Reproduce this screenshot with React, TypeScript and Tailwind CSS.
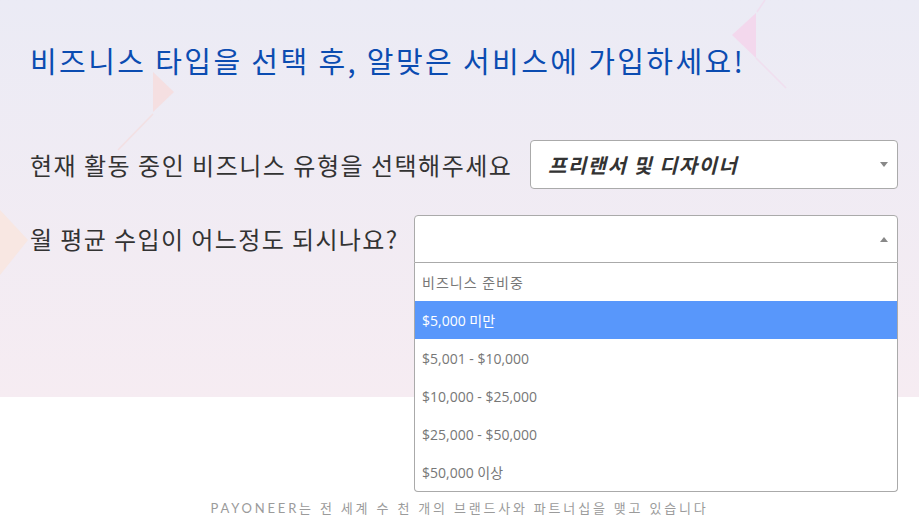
import { useState } from "react";

const OPTIONS = [
  "비즈니스 준비중",
  "$5,000 미만",
  "$5,001 - $10,000",
  "$10,000 - $25,000",
  "$25,000 - $50,000",
  "$50,000 이상",
];

const KR = "font-['Noto_Sans_CJK_KR',sans-serif]";

function Arrow({ up = false }: { up?: boolean }) {
  return (
    <svg width="8" height="5" viewBox="0 0 8 5" className="shrink-0">
      {up ? <path d="M0 5 L4 0 L8 5 Z" fill="#888" /> : <path d="M0 0 L8 0 L4 5 Z" fill="#888" />}
    </svg>
  );
}

export default function App() {
  const [active] = useState(1);

  return (
    <div className="relative h-[520px] w-[919px] overflow-hidden bg-white">
      <section className="relative h-[397px] bg-gradient-to-b from-[#ebebf5] to-[#f6ecf2]">
        {/* faint background shapes */}
        <svg className="pointer-events-none absolute inset-0" width="919" height="397">
          <polygon points="153,72 174,92 153,112" fill="#f6dcdc" opacity="0.8" />
          <line x1="153" y1="114" x2="118" y2="150" stroke="#f6dcdc" strokeWidth="1.5" opacity="0.7" />
          <polygon points="756,13 732,35 756,58" fill="#f4d6ec" opacity="0.9" />
          <line x1="756" y1="58" x2="786" y2="88" stroke="#f4d6ec" strokeWidth="1.5" opacity="0.6" />
          <line x1="765" y1="0" x2="757" y2="12" stroke="#f4d6ec" strokeWidth="1.5" opacity="0.6" />
          <polygon points="0,210 28,240 0,275" fill="#f8e7e2" />
        </svg>

        <div className={`relative pl-[30px] pr-[21px] pt-[43px] ${KR}`}>
          <h1 className="text-[29px] leading-[35px] font-normal tracking-[2.4px] text-[#0b4cb1]">
            비즈니스 타입을 선택 후, 알맞은 서비스에 가입하세요!
          </h1>

          <div className="mt-[62px] flex items-center justify-between">
            <label className="text-[24px] leading-[30px] tracking-[1.5px] text-[#333]">
              현재 활동 중인 비즈니스 유형을 선택해주세요
            </label>
            <div className="flex h-[49px] w-[368px] items-center justify-between rounded border border-[#aaa] bg-white pl-[17px] pr-[9px]">
              <span className="text-[20px] font-bold italic tracking-[1.4px] text-[#333]">프리랜서 및 디자이너</span>
              <Arrow />
            </div>
          </div>

          <div className="mt-[26px] flex items-center justify-between">
            <label className="text-[24px] leading-[30px] tracking-[1.4px] text-[#333]">
              월 평균 수입이 어느정도 되시나요?
            </label>
            <div className="relative w-[484px]">
              <div className="flex h-[48px] items-center justify-end rounded-t border border-[#aaa] bg-white pr-[9px]">
                <Arrow up />
              </div>
              <ul className="absolute left-0 right-0 top-full z-10 rounded-b border border-t-0 border-[#aaa] bg-white font-['Open_Sans','Noto_Sans_CJK_KR',sans-serif] text-[14px]">
                {OPTIONS.map((o, i) => (
                  <li
                    key={o}
                    className={
                      "flex h-[38px] items-center px-[7px] " +
                      (i === 0 ? "tracking-[1px] " : "") +
                      (i === active ? "bg-[#5897fb] text-white" : "text-[#777]")
                    }
                  >
                    {o}
                  </li>
                ))}
              </ul>
            </div>
          </div>
        </div>
      </section>

      <footer className="flex h-[123px] items-end justify-center pb-[2px]">
        <p className="font-['Lato','Noto_Sans_CJK_KR',sans-serif] text-[13px] leading-[20px] tracking-[2.8px] text-[#9b9b9b]">
          PAYONEER는 전 세계 수 천 개의 브랜드사와 파트너십을 맺고 있습니다
        </p>
      </footer>
    </div>
  );
}
